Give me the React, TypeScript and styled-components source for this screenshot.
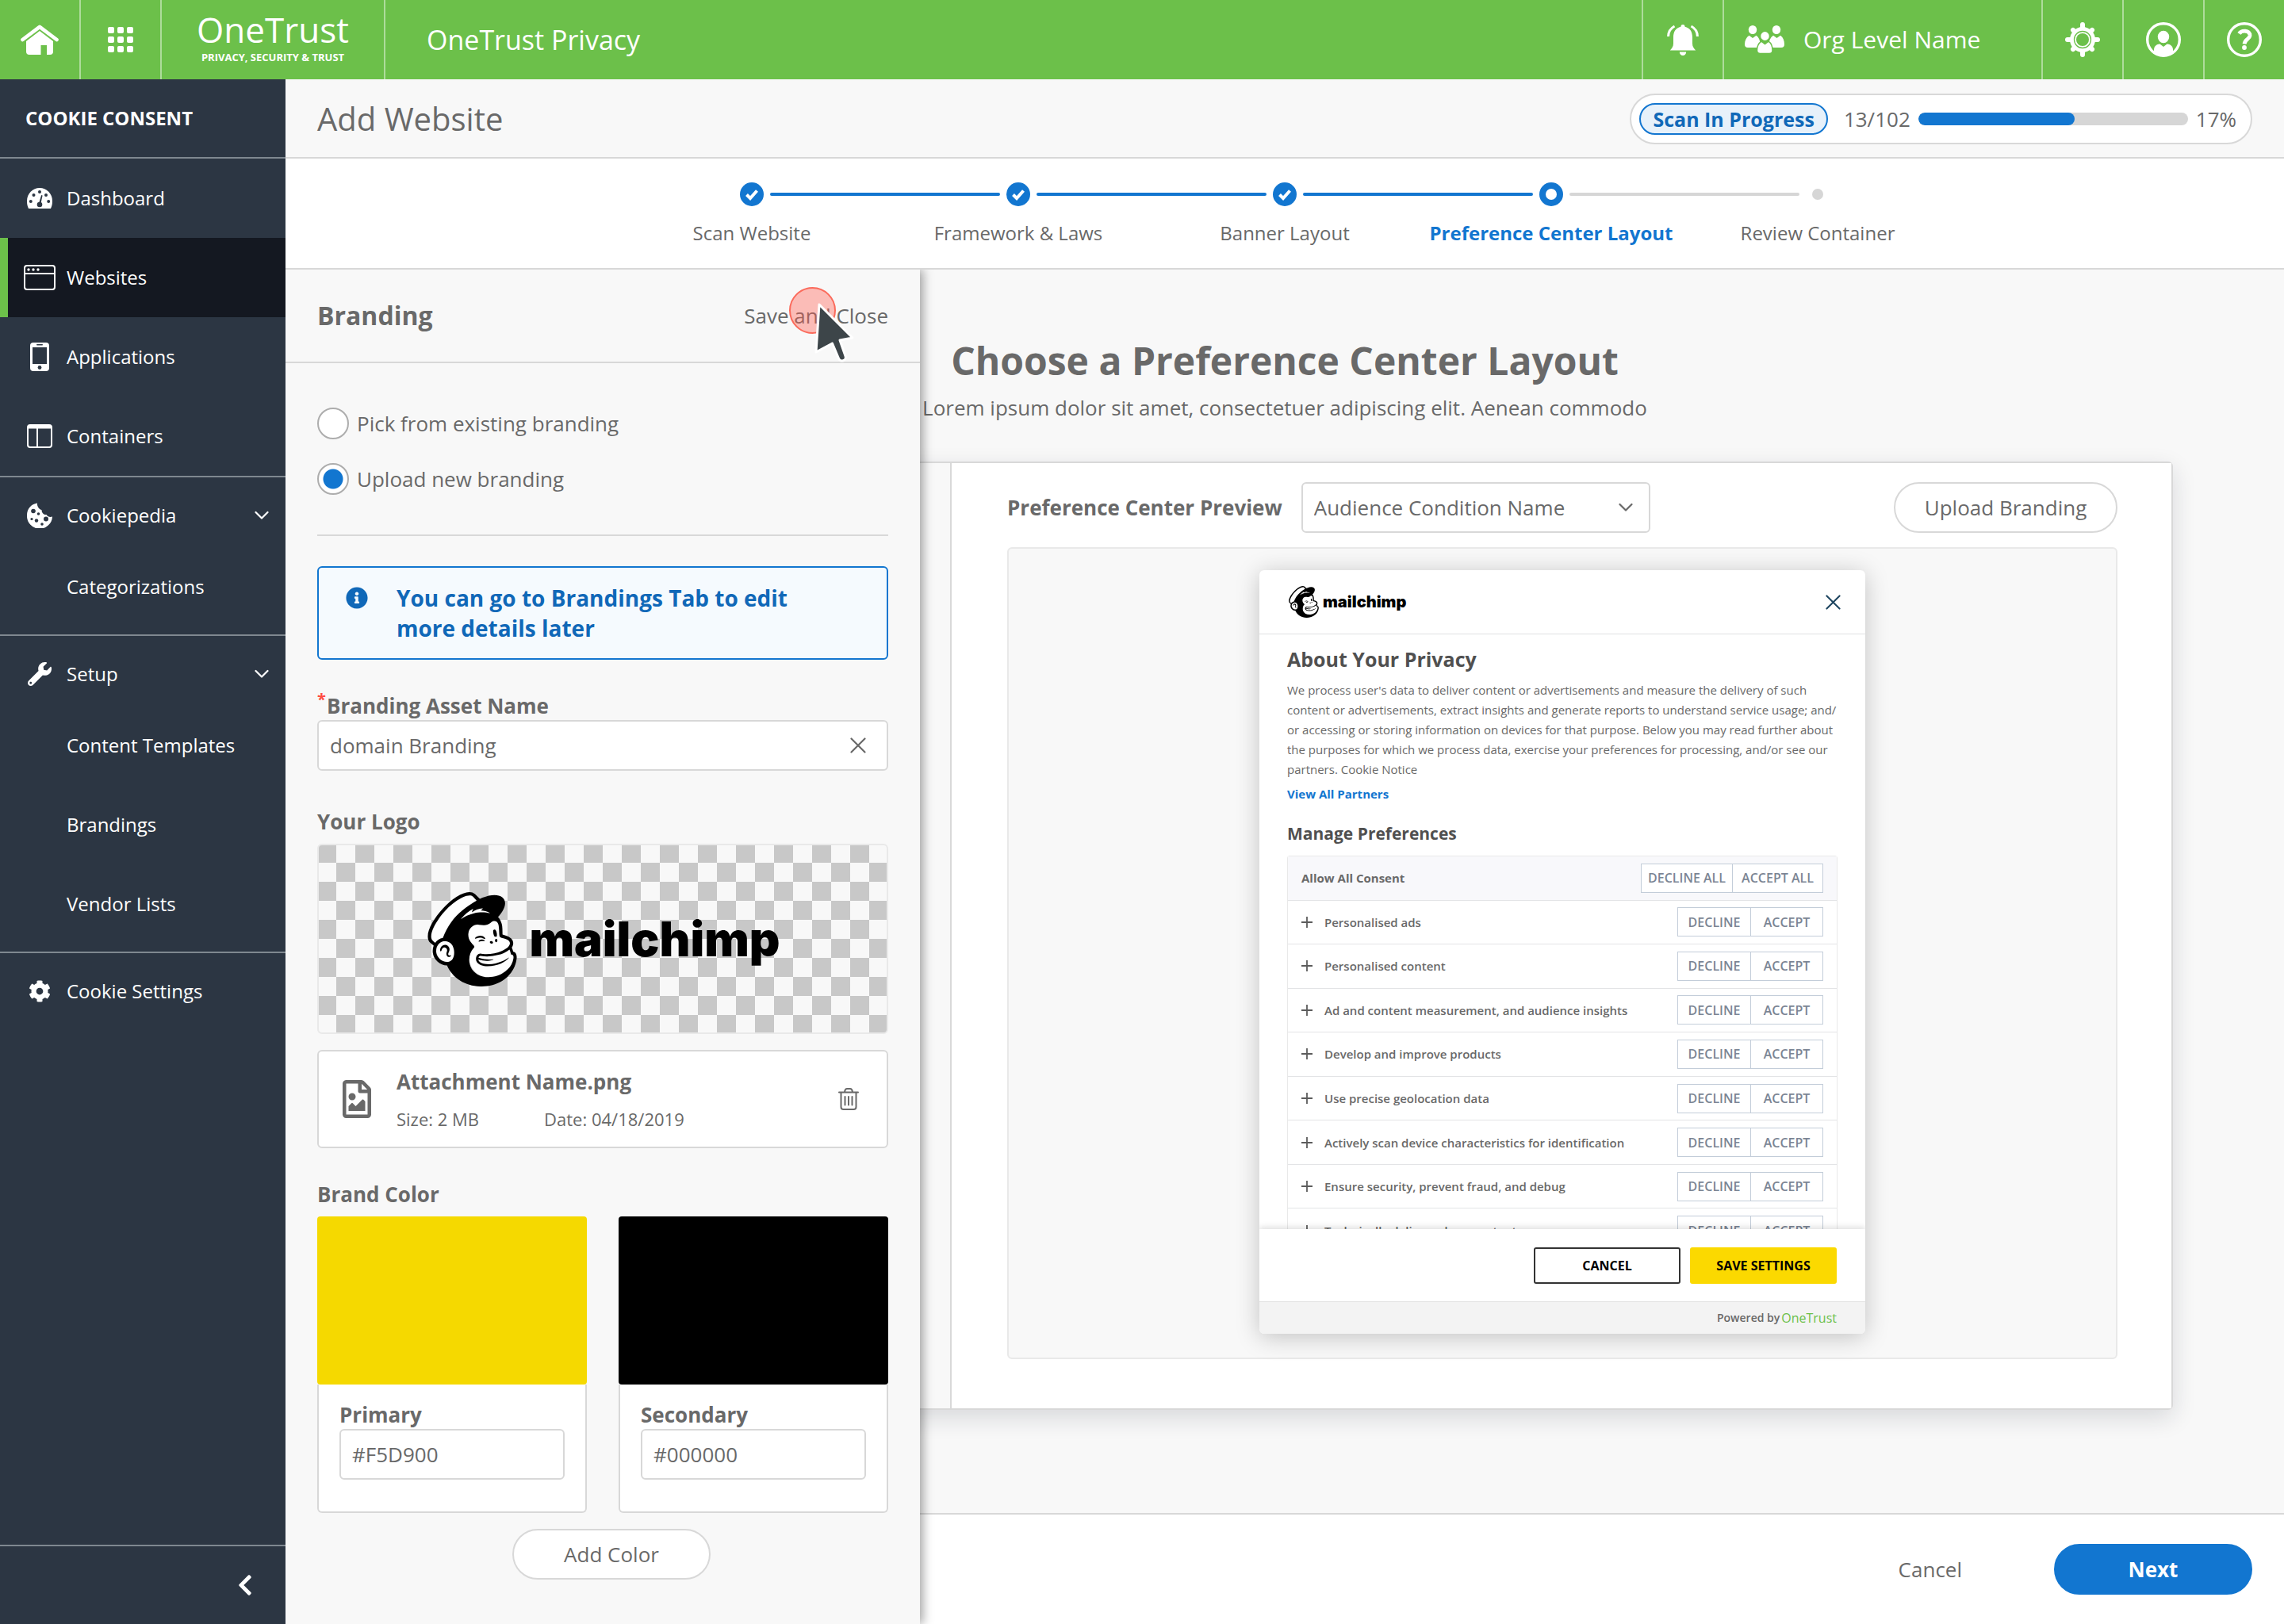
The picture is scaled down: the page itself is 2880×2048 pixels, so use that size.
import React, { useState } from "react";
import styled, { createGlobalStyle, css } from "styled-components";
import { FaChevronLeft, FaCog, FaInfoCircle, FaRegFileImage, FaWrench } from "react-icons/fa";
import { SiMailchimp } from "react-icons/si";

const color = {
  green: "#6cc04a",
  navy: "#2c3643",
  navyActive: "#141821",
  blue: "#1276d0",
  blueDark: "#1068b8",
  text: "#696969",
  line: "#d8d8d8",
  lineSoft: "#e9e9e9",
  panel: "#f8f8f8",
};

const GlobalStyle = createGlobalStyle`
  *, *::before, *::after { box-sizing: border-box; }
  body {
    margin: 0;
    background: ${color.panel};
    color: ${color.text};
    font: 400 26px/36px "Open Sans", "Noto Sans", sans-serif;
  }
  button, input, select { font: inherit; color: inherit; }
  button { cursor: pointer; padding: 0; border: 0; background: none; }
  h1, h2, h3, h4, p, ul, ol, fieldset { margin: 0; padding: 0; border: 0; }
  ul, ol { list-style: none; }
  a { text-decoration: none; color: inherit; }
  svg { display: block; flex: none; }
`;

/* ---------- Shell ---------- */

const Page = styled.div`
  display: flex;
  flex-direction: column;
  min-height: 100vh;
`;

const TopBar = styled.header`
  display: flex;
  height: 100px;
  background: ${color.green};
  color: #fff;
`;

const barDivider = "2px solid rgba(255, 255, 255, 0.45)";

const BarButton = styled.button<{ $side: "left" | "right" }>`
  display: flex;
  align-items: center;
  justify-content: center;
  width: 102px;
  color: #fff;
  ${(p) => (p.$side === "left" ? css`border-right: ${barDivider};` : css`border-left: ${barDivider};`)}
`;

const Brand = styled.a`
  display: flex;
  flex-direction: column;
  align-items: center;
  justify-content: center;
  gap: 4px;
  width: 282px;
  padding-bottom: 4px;
  border-right: ${barDivider};
`;

const BrandName = styled.span`
  font-size: 44px;
  line-height: 44px;
`;

const BrandTag = styled.span`
  font-size: 13px;
  line-height: 18px;
  font-weight: 700;
`;

const BarTitle = styled.div`
  flex: 1;
  display: flex;
  align-items: center;
  padding-left: 52px;
  font-size: 34px;
`;

const OrgButton = styled.button`
  display: flex;
  align-items: center;
  gap: 24px;
  width: 402px;
  padding-left: 26px;
  border-left: ${barDivider};
  color: #fff;
  font-size: 30px;
`;

const Body = styled.div`
  flex: 1;
  display: flex;
`;

const Content = styled.div`
  flex: 1;
  min-width: 0;
  display: flex;
  flex-direction: column;
`;

/* ---------- Sidebar ---------- */

const sideLine = "2px solid #7f8890";

const Sidebar = styled.nav`
  display: flex;
  flex-direction: column;
  width: 360px;
  background: ${color.navy};
  color: #fff;
  font-size: 24px;
`;

const SideTitle = styled.h2`
  display: flex;
  align-items: center;
  height: 100px;
  padding-left: 32px;
  border-bottom: ${sideLine};
  font-size: 24px;
  font-weight: 700;
`;

const SideGroup = styled.ul<{ $nested?: boolean }>`
  ${(p) => p.$nested && css`padding-bottom: 10px;`}
  & + & { border-top: ${sideLine}; }
`;

const sideRow = css`
  display: flex;
  align-items: center;
  gap: 14px;
  width: 100%;
  height: 100px;
  padding: 0 21px 0 30px;
  text-align: left;
`;

const SideLink = styled.a<{ $active?: boolean; $compact?: boolean }>`
  ${sideRow}
  ${(p) => p.$compact && css`height: 96px;`}
  ${(p) =>
    p.$active &&
    css`
      background: ${color.navyActive};
      box-shadow: inset 10px 0 0 ${color.green};
    `}
`;

const SideToggle = styled.button`
  ${sideRow}
  height: 88px;
  padding-top: 8px;
`;

const SideSub = styled.a`
  ${sideRow}
  padding-left: 84px;
`;

const SideIcon = styled.span`
  display: flex;
  justify-content: center;
  width: 40px;
`;

const SideLabel = styled.span`
  flex: 1;
`;

const Collapse = styled.button`
  display: flex;
  align-items: center;
  justify-content: flex-end;
  height: 100px;
  margin-top: auto;
  padding-right: 36px;
  border-top: ${sideLine};
  color: #fff;
`;

/* ---------- Page title and stepper ---------- */

const TitleRow = styled.div`
  display: flex;
  align-items: center;
  justify-content: space-between;
  height: 100px;
  padding: 2px 40px 0;
  border-bottom: 2px solid ${color.line};
`;

const PageTitle = styled.h1`
  font-size: 40px;
  font-weight: 400;
  line-height: 56px;
`;

const ScanPill = styled.div`
  display: flex;
  align-items: center;
  gap: 10px;
  height: 64px;
  padding: 0 18px 0 10px;
  border: 2px solid ${color.line};
  border-radius: 32px;
  background: #fff;
`;

const ScanBadge = styled.span`
  height: 40px;
  margin-right: 10px;
  padding: 0 15px;
  border: 2px solid ${color.blue};
  border-radius: 20px;
  background: #e7f1fa;
  color: ${color.blueDark};
  font-size: 25px;
  line-height: 36px;
  font-weight: 700;
`;

const Track = styled.div`
  width: 340px;
  height: 16px;
  border-radius: 8px;
  background: #d6d6d6;
  overflow: hidden;
`;

const TrackFill = styled.div`
  height: 100%;
  border-radius: 8px;
  background: ${color.blue};
`;

const Stepper = styled.ol`
  display: flex;
  justify-content: center;
  height: 140px;
  padding-top: 30px;
  border-bottom: 2px solid ${color.line};
  background: #fff;
`;

const Step = styled.li<{ $current: boolean }>`
  width: 336px;
  text-align: center;
  font-size: 24px;
  ${(p) => p.$current && css`color: ${color.blue}; font-weight: 700;`}
`;

const StepRail = styled.div`
  display: flex;
  align-items: center;
  gap: 8px;
  height: 30px;
  margin-bottom: 16px;
`;

const RailHalf = styled.span<{ $tone: "done" | "todo" | "none"; $end: "left" | "right" }>`
  flex: 1;
  height: 4px;
  border-radius: ${(p) => (p.$end === "left" ? "0 2px 2px 0" : "2px 0 0 2px")};
  background: ${(p) => ({ done: color.blue, todo: "#d6d6d6", none: "transparent" })[p.$tone]};
`;

/* ---------- Stage ---------- */

const Stage = styled.div`
  position: relative;
  flex: 1;
  display: flex;
  flex-direction: column;
`;

const Main = styled.main`
  flex: 1;
  padding: 84px 140px 130px;
`;

const Heading = styled.h2`
  text-align: center;
  font-size: 48px;
  line-height: 62px;
  font-weight: 700;
`;

const Intro = styled.p`
  margin: 9px 0 49px;
  text-align: center;
  line-height: 38px;
`;

const LayoutCard = styled.section`
  display: grid;
  grid-template-columns: 696px minmax(0, 1fr);
  border: 2px solid ${color.line};
  border-radius: 6px;
  background: ${color.panel};
  box-shadow: 0 10px 30px rgba(20, 30, 50, 0.14);
`;

const Preview = styled.div`
  grid-column: 2;
  padding: 24px 68px 62px 70px;
  border-left: 2px solid ${color.line};
  background: #fff;
`;

const PreviewBar = styled.div`
  display: flex;
  align-items: center;
  gap: 24px;
  margin-bottom: 18px;
`;

const FieldLabel = styled.label`
  display: flex;
  font-weight: 700;
`;

const SelectWrap = styled.div`
  display: grid;
  align-items: center;
  width: 440px;
  margin-right: auto;
  & > * { grid-area: 1 / 1; }
  & > svg { justify-self: end; margin-right: 22px; pointer-events: none; }
`;

const Select = styled.select`
  appearance: none;
  width: 100%;
  height: 64px;
  padding: 0 14px;
  border: 2px solid ${color.line};
  border-radius: 6px;
  background: #fff;
`;

const PillButton = styled.button<{ $width: number; $primary?: boolean }>`
  width: ${(p) => p.$width}px;
  height: 64px;
  border: 2px solid ${(p) => (p.$primary ? color.blue : color.line)};
  border-radius: 32px;
  background: ${(p) => (p.$primary ? color.blue : "#fff")};
  ${(p) => p.$primary && css`color: #fff; font-weight: 700;`}
`;

const Canvas = styled.div`
  display: flex;
  justify-content: center;
  padding: 27px 0 30px;
  border: 2px solid ${color.lineSoft};
  border-radius: 6px;
  background: ${color.panel};
`;

const Footer = styled.footer`
  display: flex;
  align-items: center;
  justify-content: flex-end;
  gap: 116px;
  height: 140px;
  padding: 0 40px;
  border-top: 2px solid ${color.line};
  background: #fff;
`;

/* ---------- Consent dialog preview ---------- */

const Dialog = styled.article`
  display: flex;
  flex-direction: column;
  width: 764px;
  border-radius: 6px;
  background: #fff;
  box-shadow: 0 4px 30px rgba(0, 0, 0, 0.22);
  overflow: hidden;
`;

const DialogHead = styled.div`
  display: flex;
  align-items: center;
  justify-content: space-between;
  height: 81px;
  padding: 0 31px 0 36px;
  border-bottom: 1px solid #dfe1e3;
`;

const DialogBody = styled.div`
  height: 750px;
  padding: 14px 35px 0;
  overflow: hidden;
`;

const DialogTitle = styled.h3`
  color: #505050;
  font-size: 25px;
  line-height: 34px;
  font-weight: 700;
`;

const DialogText = styled.p`
  margin: 10px 0 8px;
  font-size: 15px;
  line-height: 25px;
`;

const PartnersLink = styled.a`
  display: block;
  color: ${color.blue};
  font-size: 15px;
  line-height: 20px;
  font-weight: 700;
`;

const PrefTitle = styled.h4`
  margin: 26px 0 14px;
  color: #505050;
  font-size: 21px;
  line-height: 28px;
  font-weight: 700;
`;

const PrefList = styled.ul`
  display: grid;
  grid-template-rows: repeat(9, 1fr);
  height: 502px;
  border: 1px solid ${color.lineSoft};
  border-radius: 3px;
`;

const PrefRow = styled.li<{ $head?: boolean }>`
  display: flex;
  align-items: center;
  gap: 15px;
  padding: 0 17px;
  border-bottom: 1px solid #e3e4e6;
  font-size: 15px;
  line-height: 20px;
  font-weight: ${(p) => (p.$head ? 700 : 600)};
  background: ${(p) => (p.$head ? "#f8f8fb" : "#fff")};
`;

const PrefName = styled.span`
  flex: 1;
`;

const Choice = styled.div<{ $wide?: boolean }>`
  display: grid;
  grid-template-columns: 1fr 1fr;
  width: ${(p) => (p.$wide ? 230 : 184)}px;
  border: 1px solid #c3cdd9;
  background: #fff;
`;

const ChoiceButton = styled.button`
  height: 35px;
  color: #7b8594;
  font-size: 16px;
  line-height: 20px;
  font-weight: 600;
  & + & { border-left: 1px solid #c3cdd9; }
`;

const DialogActions = styled.div`
  display: flex;
  align-items: center;
  justify-content: flex-end;
  gap: 12px;
  height: 92px;
  padding: 0 36px;
  border-bottom: 1px solid #e3e3e3;
  background: #fff;
  box-shadow: 0 -2px 8px rgba(0, 0, 0, 0.14);
`;

const DialogButton = styled.button<{ $fill?: boolean }>`
  width: 185px;
  height: 46px;
  border: 2px solid ${(p) => (p.$fill ? "#fbd900" : "#333")};
  border-radius: 3px;
  background: ${(p) => (p.$fill ? "#fbd900" : "#fff")};
  color: #000;
  font-size: 16px;
  font-weight: 700;
`;

const Powered = styled.div`
  display: flex;
  align-items: center;
  justify-content: flex-end;
  gap: 2px;
  height: 40px;
  padding: 0 36px;
  background: #f3f3f3;
  font-size: 14px;
  line-height: 36px;
  font-weight: 600;
`;

const PoweredBrand = styled.span`
  color: ${color.green};
  font-size: 16px;
  font-weight: 400;
`;

/* ---------- Branding drawer ---------- */

const Drawer = styled.aside`
  position: absolute;
  top: 0;
  bottom: 0;
  left: 0;
  width: 800px;
  background: ${color.panel};
  box-shadow: 4px 0 12px rgba(0, 0, 0, 0.35);
  clip-path: inset(0 -40px 0 0);
`;

const DrawerHead = styled.div`
  display: flex;
  align-items: center;
  justify-content: space-between;
  height: 118px;
  padding: 0 40px;
  border-bottom: 2px solid ${color.line};
`;

const DrawerTitle = styled.h2`
  font-size: 32px;
  line-height: 44px;
  font-weight: 700;
`;

const DrawerBody = styled.div`
  padding: 56px 40px 40px;
`;

const RadioGroup = styled.fieldset`
  display: flex;
  flex-direction: column;
  gap: 30px;
  padding-bottom: 50px;
  border-bottom: 2px solid ${color.line};
`;

const RadioLabel = styled.label`
  display: flex;
  align-items: center;
  gap: 10px;
  height: 40px;
`;

const Radio = styled.input`
  appearance: none;
  width: 40px;
  height: 40px;
  margin: 0;
  border: 2px solid #adadad;
  border-radius: 50%;
  background: #fff;
  &:checked {
    background: radial-gradient(circle, ${color.blue} 12px, #fff 13px);
  }
`;

const Notice = styled.div`
  display: flex;
  gap: 36px;
  margin: 38px 0 40px;
  padding: 19px 100px 19px 34px;
  border: 2px solid ${color.blue};
  border-radius: 6px;
  background: #f5fafe;
  color: ${color.blueDark};
  font-size: 28px;
  line-height: 38px;
  font-weight: 700;
  & > svg { margin-top: 5px; }
`;

const Required = styled.span`
  width: 12px;
  color: #ff4b42;
  font-size: 20px;
  line-height: 20px;
`;

const TextBox = styled.div`
  display: flex;
  align-items: center;
  height: 64px;
  padding-right: 26px;
  border: 2px solid ${color.line};
  border-radius: 6px;
  background: #fff;
`;

const TextInput = styled.input`
  flex: 1;
  width: 0;
  min-width: 0;
  height: 100%;
  padding: 0 14px;
  border: 0;
  background: none;
`;

const GroupTitle = styled.h3<{ $gap: number }>`
  margin: ${(p) => p.$gap}px 0 10px;
  font-size: 26px;
  line-height: 36px;
  font-weight: 700;
`;

const LogoBox = styled.div`
  display: flex;
  align-items: center;
  justify-content: center;
  height: 240px;
  margin-bottom: 20px;
  border: 2px solid ${color.lineSoft};
  border-radius: 6px;
  background: conic-gradient(#f8f8f8 25%, #c8c8c8 0 50%, #f8f8f8 0 75%, #c8c8c8 0) 0 0 / 48px 48px border-box;
`;

const Attachment = styled.div`
  display: flex;
  align-items: center;
  height: 124px;
  padding: 0 35px 0 24px;
  border: 2px solid ${color.line};
  border-radius: 6px;
  background: #fff;
`;

const AttachmentInfo = styled.div`
  flex: 1;
  margin-left: 26px;
`;

const AttachmentName = styled.div`
  margin-bottom: 14px;
  font-weight: 700;
`;

const AttachmentMeta = styled.div`
  display: flex;
  gap: 82px;
  font-size: 22px;
  line-height: 30px;
`;

const Swatches = styled.div`
  display: grid;
  grid-template-columns: repeat(2, minmax(0, 1fr));
  gap: 40px;
  margin-bottom: 20px;
`;

const SwatchColor = styled.div`
  height: 212px;
  border-radius: 4px;
`;

const SwatchBody = styled.div`
  padding: 20px 26px 40px;
  border: 2px solid ${color.line};
  border-top: 0;
  border-radius: 0 0 6px 6px;
  background: #fff;
`;

const AddRow = styled.div`
  display: flex;
  justify-content: center;
  padding-left: 22px;
`;

const Pointer = styled.svg`
  position: absolute;
  top: 20px;
  left: 634px;
  pointer-events: none;
`;

/* ---------- Logo ---------- */

const LogoRow = styled.div<{ $size: number }>`
  display: flex;
  align-items: center;
  gap: ${(p) => (p.$size > 60 ? 12 : 4)}px;
  color: #000;
  font-family: Inter, "Open Sans", sans-serif;
  font-size: ${(p) => (p.$size > 60 ? 60 : 20)}px;
  line-height: ${(p) => p.$size}px;
  font-weight: 900;
`;

function MailchimpLogo({ size }: { size: number }) {
  return (
    <LogoRow $size={size}>
      <svg width={size} height={size} viewBox="0 0 24 24" aria-hidden="true">
        <g transform="translate(0.7 0) scale(0.067) translate(-55 -42)" fill="#fff" stroke="#fff" strokeWidth="5">
          <path d="M82 230C70 222 66 208 71 192C83 155 122 102 165 72C185 58 210 50 222 57C228 60 233 66 238 73C270 90 300 110 292 122C240 120 200 135 182 146L140 160C125 182 118 205 113 218Z" />
          <ellipse cx="120" cy="268" rx="36" ry="40" />
          <path d="M210 200C210 178 222 165 245 163C265 161 280 168 295 163C305 152 318 146 323 156C328 170 329 195 329 214C350 212 372 225 373 243C373 256 370 262 366 265C372 270 376 274 378 281C386 290 384 300 378 312C370 340 335 364 290 365C245 365 215 330 214 292C214 275 222 260 235 248C222 240 210 222 210 200Z" />
        </g>
        <SiMailchimp size={24} color="#000" />
      </svg>
      mailchimp
    </LogoRow>
  );
}

/* ---------- Icons ---------- */

const HomeIcon = () => (
  <svg width="48" height="38" viewBox="0 0 48 38" fill="#fff">
    <path d="M2.5 19L24 2.8L45.5 19" fill="none" stroke="#fff" strokeWidth="4.6" strokeLinecap="round" strokeLinejoin="round" />
    <path d="M24 8L41 21V34a4 4 0 0 1-4 4H33V26H25.5V38H11a4 4 0 0 1-4-4V21Z" />
  </svg>
);

const GridIcon = () => (
  <svg width="32" height="32" viewBox="0 0 32 32" fill="#fff">
    {[0, 12, 24].map((y) => [0, 12, 24].map((x) => <rect key={`${x}-${y}`} x={x} y={y} width="8" height="8" rx="2" />))}
  </svg>
);

const BellIcon = () => (
  <svg width="40" height="39" viewBox="0 0 40 39" fill="#fff">
    <path d="M20 0C22 0 22.4 1.4 22.6 2.8C29 4.2 32 9 32 16V24C32 28 34 30 36.2 32.5H3.8C6 30 8 28 8 24V16C8 9 11 4.2 17.4 2.8C17.6 1.4 18 0 20 0Z" />
    <path d="M15.8 34.5h8.4a4.2 4.5 0 0 1-8.4 0Z" />
    <path d="M9.5 2C4 5 1.6 9.5 1.6 15M30.5 2C36 5 38.4 9.5 38.4 15" fill="none" stroke="#fff" strokeWidth="3" />
  </svg>
);

const personBody = "M5.5 12.7L10 16L14.5 12.7C18 15 19.5 19 19.5 24q0 4-4 4H4q-4 0-4-4C0 19 2 15 5.5 12.7Z";

const UsersIcon = () => (
  <svg width="50" height="36" viewBox="0 0 50 36" fill="#fff">
    <ellipse cx="10" cy="5.5" rx="5.2" ry="5.5" />
    <path d={personBody} />
    <ellipse cx="40" cy="5.5" rx="5.2" ry="5.5" />
    <path d={personBody} transform="translate(30.5 0)" />
    <ellipse cx="25.5" cy="13.5" rx="6" ry="6.2" stroke={color.green} strokeWidth="1.5" />
    <path d={personBody} transform="translate(15.5 7.5)" stroke={color.green} strokeWidth="1.5" />
  </svg>
);

const GearIcon = () => (
  <svg width="44" height="44" viewBox="0 0 44 44">
    <g stroke="#fff" strokeWidth="6" strokeLinecap="round">
      {[0, 90, 180, 270].map((a) => <path key={a} d="M22 9V3" transform={`rotate(${a} 22 22)`} />)}
      {[45, 135, 225, 315].map((a) => <path key={a} d="M22 9V5" transform={`rotate(${a} 22 22)`} />)}
    </g>
    <circle cx="22" cy="22" r="16" fill="#fff" />
    <circle cx="22" cy="22" r="10.5" fill="none" stroke={color.green} strokeWidth="1.3" />
    <circle cx="22" cy="22" r="8" fill={color.green} />
  </svg>
);

const UserIcon = () => (
  <svg width="44" height="44" viewBox="0 0 44 44" fill="#fff">
    <circle cx="22" cy="22" r="20.3" fill="none" stroke="#fff" strokeWidth="3.4" />
    <ellipse cx="22" cy="18.5" rx="7.2" ry="7.8" />
    <path d="M10 37C9.5 31 12 28 17.5 27.5L22 31L26.5 27.5C32 28 34.5 31 34 37C28 43 16 43 10 37Z" />
  </svg>
);

const HelpIcon = () => (
  <svg width="44" height="44" viewBox="0 0 44 44" fill="none" stroke="#fff">
    <circle cx="22" cy="22" r="20.3" strokeWidth="3.4" />
    <path d="M15.5 14.5C18 10 29.500 9.500 29 17C28.500 21.500 22.500 21.500 22 27.500" strokeWidth="4.800" />
    <circle cx="22" cy="32" r="2.900" fill="#fff" stroke="none" />
  </svg>
);

const DashboardIcon = () => (
  <svg width="32" height="26" viewBox="0 0 32 26" fill="#fff">
    <path d="M2 26C.5 23 0 20 0 16.5A16 16.5 0 0 1 32 16.5C32 20 31.5 23 30 26Z" />
    <g fill={color.navy}>
      <circle cx="4.8" cy="17" r="2" />
      <circle cx="8.5" cy="9" r="2" />
      <circle cx="16" cy="5" r="2" />
      <circle cx="24" cy="9" r="2" />
      <circle cx="27.2" cy="17" r="2" />
      <circle cx="16" cy="21" r="3.3" />
      <path d="M14.8 20L18.2 9L19.6 9.4L17.4 20Z" />
    </g>
  </svg>
);

const WebsitesIcon = () => (
  <svg width="40" height="32" viewBox="0 0 40 32" fill="none" stroke="#fff" strokeWidth="2">
    <rect x="1" y="1" width="38" height="30" rx="3" />
    <path d="M1 11H39" />
    <g fill="#fff" stroke="none">
      <circle cx="6" cy="6" r="1.7" />
      <circle cx="12" cy="6" r="1.7" />
      <circle cx="18" cy="6" r="1.7" />
    </g>
  </svg>
);

const PhoneIcon = () => (
  <svg width="24" height="36" viewBox="0 0 24 36">
    <rect width="24" height="36" rx="4" fill="#fff" />
    <rect x="3" y="6" width="18" height="21" fill={color.navy} />
    <rect x="8" y="2" width="8" height="1.6" rx=".8" fill={color.navy} />
    <circle cx="12" cy="31.5" r="2.4" fill={color.navy} />
  </svg>
);

const ContainersIcon = () => (
  <svg width="32" height="30" viewBox="0 0 32 30" fill="none" stroke="#fff" strokeWidth="2">
    <rect x="1" y="1" width="30" height="28" rx="3" />
    <path d="M1 3.5H31" strokeWidth="4" />
    <path d="M13 4V29" />
  </svg>
);

const CookieIcon = () => (
  <svg width="32" height="32" viewBox="0 0 32 32" fill="#fff">
    <path d="M13 .5C5 1.5 0 8 0 16A16 16 0 0 0 32 17.5C29 18.5 26 17.5 24.5 15C21.5 15.5 18.5 13 18.5 9C15 8 12.5 4 13 .5Z" />
    <g fill={color.navy}>
      <circle cx="8" cy="10.5" r="2.8" />
      <circle cx="14.5" cy="14" r="1.8" />
      <circle cx="6" cy="20.5" r="1.6" />
      <circle cx="12" cy="22.5" r="2.2" />
      <circle cx="24" cy="20.5" r="3" />
      <circle cx="19" cy="27" r="1.8" />
    </g>
  </svg>
);

const ChevronDown = ({ stroke = "#fff" }: { stroke?: string }) => (
  <svg width="18" height="12" viewBox="0 0 18 12" fill="none" stroke={stroke} strokeWidth="2.2" strokeLinecap="round" strokeLinejoin="round">
    <path d="M1.5 2L9 9.5L16.5 2" />
  </svg>
);

const CloseIcon = ({ stroke, size }: { stroke: string; size: number }) => (
  <svg width={size} height={size} viewBox="0 0 20 20" fill="none" stroke={stroke} strokeWidth="2.2" strokeLinecap="round">
    <path d="M1.5 1.5L18.5 18.5M18.5 1.5L1.5 18.5" />
  </svg>
);

const PlusIcon = () => (
  <svg width="14" height="14" viewBox="0 0 14 14" stroke="#5c5c5c" strokeWidth="1.8">
    <path d="M7 0V14M0 7H14" />
  </svg>
);

const TrashIcon = () => (
  <svg width="26" height="28" viewBox="0 0 26 28" fill="none" stroke={color.text} strokeWidth="2" strokeLinecap="round">
    <path d="M1 5.5H25M8 5C8.5 1.5 9.5 1 11 1H15C16.5 1 17.5 1.5 18 5" />
    <path d="M3.5 6V24q0 3 3 3H19.5q3 0 3-3V6" />
    <path d="M8.5 11V21.5M13 11V21.5M17.5 11V21.5" />
  </svg>
);

function StepMark({ state }: { state: "done" | "current" | "todo" }) {
  return (
    <svg width="30" height="30" viewBox="0 0 30 30">
      <circle cx="15" cy="15" r={state === "todo" ? 7 : 15} fill={state === "todo" ? "#d6d6d6" : color.blue} />
      {state === "done" && <path d="M8.5 15.5L13 20L21.5 10.5" fill="none" stroke="#fff" strokeWidth="4" />}
      {state === "current" && <circle cx="15" cy="15" r="7" fill="#fff" />}
    </svg>
  );
}

/* ---------- Data ---------- */

const steps = ["Scan Website", "Framework & Laws", "Banner Layout", "Preference Center Layout", "Review Container"];
const currentStep = 3;

const purposes = [
  "Personalised ads",
  "Personalised content",
  "Ad and content measurement, and audience insights",
  "Develop and improve products",
  "Use precise geolocation data",
  "Actively scan device characteristics for identification",
  "Ensure security, prevent fraud, and debug",
  "Technically deliver ads or content",
];

const swatches = [
  { id: "primary", label: "Primary", value: "#F5D900" },
  { id: "secondary", label: "Secondary", value: "#000000" },
];

/* ---------- Sections ---------- */

function SideNav() {
  return (
    <Sidebar aria-label="Cookie consent">
      <SideTitle>COOKIE CONSENT</SideTitle>
      <SideGroup>
        <li><SideLink href="#dashboard"><SideIcon><DashboardIcon /></SideIcon>Dashboard</SideLink></li>
        <li><SideLink href="#websites" $active><SideIcon><WebsitesIcon /></SideIcon>Websites</SideLink></li>
        <li><SideLink href="#applications"><SideIcon><PhoneIcon /></SideIcon>Applications</SideLink></li>
        <li><SideLink href="#containers"><SideIcon><ContainersIcon /></SideIcon>Containers</SideLink></li>
      </SideGroup>
      <SideGroup $nested>
        <li><SideToggle><SideIcon><CookieIcon /></SideIcon><SideLabel>Cookiepedia</SideLabel><ChevronDown /></SideToggle></li>
        <li><SideSub href="#categorizations">Categorizations</SideSub></li>
      </SideGroup>
      <SideGroup $nested>
        <li><SideToggle><SideIcon><FaWrench size={30} /></SideIcon><SideLabel>Setup</SideLabel><ChevronDown /></SideToggle></li>
        <li><SideSub href="#templates">Content Templates</SideSub></li>
        <li><SideSub href="#brandings">Brandings</SideSub></li>
        <li><SideSub href="#vendors">Vendor Lists</SideSub></li>
      </SideGroup>
      <SideGroup>
        <li><SideLink href="#settings" $compact><SideIcon><FaCog size={28} /></SideIcon>Cookie Settings</SideLink></li>
      </SideGroup>
      <Collapse aria-label="Collapse menu"><FaChevronLeft size={30} /></Collapse>
    </Sidebar>
  );
}

function ConsentDialog() {
  return (
    <Dialog>
      <DialogHead>
        <MailchimpLogo size={40} />
        <button aria-label="Close preview"><CloseIcon stroke="#1f4660" size={19} /></button>
      </DialogHead>
      <DialogBody>
        <DialogTitle>About Your Privacy</DialogTitle>
        <DialogText>
          We process user's data to deliver content or advertisements and measure the delivery of such content or
          advertisements, extract insights and generate reports to understand service usage; and/<wbr />or accessing or
          storing information on devices for that purpose. Below you may read further about the purposes for which we
          process data, exercise your preferences for processing, and/or see our partners. Cookie Notice
        </DialogText>
        <PartnersLink href="#partners">View All Partners</PartnersLink>
        <PrefTitle>Manage Preferences</PrefTitle>
        <PrefList>
          <PrefRow $head>
            <PrefName>Allow All Consent</PrefName>
            <Choice $wide><ChoiceButton>DECLINE ALL</ChoiceButton><ChoiceButton>ACCEPT ALL</ChoiceButton></Choice>
          </PrefRow>
          {purposes.map((name) => (
            <PrefRow key={name}>
              <PlusIcon />
              <PrefName>{name}</PrefName>
              <Choice><ChoiceButton>DECLINE</ChoiceButton><ChoiceButton>ACCEPT</ChoiceButton></Choice>
            </PrefRow>
          ))}
        </PrefList>
      </DialogBody>
      <DialogActions>
        <DialogButton>CANCEL</DialogButton>
        <DialogButton $fill>SAVE SETTINGS</DialogButton>
      </DialogActions>
      <Powered>Powered by<PoweredBrand>OneTrust</PoweredBrand></Powered>
    </Dialog>
  );
}

function BrandingDrawer() {
  const [source, setSource] = useState("upload");
  const [name, setName] = useState("domain Branding");
  return (
    <Drawer>
      <DrawerHead>
        <DrawerTitle>Branding</DrawerTitle>
        <button>Save and Close</button>
      </DrawerHead>
      <DrawerBody>
        <RadioGroup>
          <RadioLabel>
            <Radio type="radio" name="source" checked={source === "existing"} onChange={() => setSource("existing")} />
            Pick from existing branding
          </RadioLabel>
          <RadioLabel>
            <Radio type="radio" name="source" checked={source === "upload"} onChange={() => setSource("upload")} />
            Upload new branding
          </RadioLabel>
        </RadioGroup>
        <Notice>
          <FaInfoCircle size={28} />
          <p>You can go to Brandings Tab to edit more details later</p>
        </Notice>
        <FieldLabel htmlFor="asset"><Required>*</Required>Branding Asset Name</FieldLabel>
        <TextBox>
          <TextInput id="asset" value={name} onChange={(e) => setName(e.target.value)} />
          <button aria-label="Clear name" onClick={() => setName("")}><CloseIcon stroke={color.text} size={20} /></button>
        </TextBox>
        <GroupTitle $gap={46}>Your Logo</GroupTitle>
        <LogoBox><MailchimpLogo size={119} /></LogoBox>
        <Attachment>
          <FaRegFileImage size={48} color={color.text} />
          <AttachmentInfo>
            <AttachmentName>Attachment Name.png</AttachmentName>
            <AttachmentMeta><span>Size: 2 MB</span><span>Date: 04/18/2019</span></AttachmentMeta>
          </AttachmentInfo>
          <button aria-label="Delete attachment"><TrashIcon /></button>
        </Attachment>
        <GroupTitle $gap={40}>Brand Color</GroupTitle>
        <Swatches>
          {swatches.map((s) => (
            <div key={s.id}>
              <SwatchColor style={{ background: s.value }} />
              <SwatchBody>
                <FieldLabel htmlFor={s.id}>{s.label}</FieldLabel>
                <TextBox><TextInput id={s.id} defaultValue={s.value} /></TextBox>
              </SwatchBody>
            </div>
          ))}
        </Swatches>
        <AddRow><PillButton $width={250}>Add Color</PillButton></AddRow>
      </DrawerBody>
      <Pointer width="90" height="100" viewBox="0 0 90 100">
        <circle cx="30.5" cy="31.5" r="28.5" fill="#ff5a4d" fillOpacity=".38" stroke="#fb6a5b" strokeWidth="2" />
        <path d="M39 24L81 66L65 69L72 89a4.500 4.500 0 0 1-8.500 3L55.500 73L35 84Z" fill="#3d4549" stroke="#fff" strokeWidth="3" strokeLinejoin="round" />
      </Pointer>
    </Drawer>
  );
}

export default function App() {
  return (
    <Page>
      <GlobalStyle />
      <TopBar>
        <BarButton $side="left" aria-label="Home"><HomeIcon /></BarButton>
        <BarButton $side="left" aria-label="Apps"><GridIcon /></BarButton>
        <Brand href="#home">
          <BrandName>OneTrust</BrandName>
          <BrandTag>PRIVACY, SECURITY &amp; TRUST</BrandTag>
        </Brand>
        <BarTitle>OneTrust Privacy</BarTitle>
        <BarButton $side="right" aria-label="Notifications"><BellIcon /></BarButton>
        <OrgButton><UsersIcon />Org Level Name</OrgButton>
        <BarButton $side="right" aria-label="Settings"><GearIcon /></BarButton>
        <BarButton $side="right" aria-label="Account"><UserIcon /></BarButton>
        <BarButton $side="right" aria-label="Help"><HelpIcon /></BarButton>
      </TopBar>
      <Body>
        <SideNav />
        <Content>
          <TitleRow>
            <PageTitle>Add Website</PageTitle>
            <ScanPill>
              <ScanBadge>Scan In Progress</ScanBadge>
              <span>13/102</span>
              <Track><TrackFill style={{ width: "58%" }} /></Track>
              <span>17%</span>
            </ScanPill>
          </TitleRow>
          <Stepper>
            {steps.map((label, i) => (
              <Step key={label} $current={i === currentStep}>
                <StepRail>
                  <RailHalf $end="left" $tone={i === 0 ? "none" : i <= currentStep ? "done" : "todo"} />
                  <StepMark state={i < currentStep ? "done" : i === currentStep ? "current" : "todo"} />
                  <RailHalf $end="right" $tone={i === steps.length - 1 ? "none" : i < currentStep ? "done" : "todo"} />
                </StepRail>
                {label}
              </Step>
            ))}
          </Stepper>
          <Stage>
            <Main>
              <Heading>Choose a Preference Center Layout</Heading>
              <Intro>Lorem ipsum dolor sit amet, consectetuer adipiscing elit. Aenean commodo</Intro>
              <LayoutCard>
                <Preview>
                  <PreviewBar>
                    <FieldLabel htmlFor="audience">Preference Center Preview</FieldLabel>
                    <SelectWrap>
                      <Select id="audience"><option>Audience Condition Name</option></Select>
                      <ChevronDown stroke={color.text} />
                    </SelectWrap>
                    <PillButton $width={282}>Upload Branding</PillButton>
                  </PreviewBar>
                  <Canvas><ConsentDialog /></Canvas>
                </Preview>
              </LayoutCard>
            </Main>
            <Footer>
              <button>Cancel</button>
              <PillButton $width={250} $primary>Next</PillButton>
            </Footer>
            <BrandingDrawer />
          </Stage>
        </Content>
      </Body>
    </Page>
  );
}
